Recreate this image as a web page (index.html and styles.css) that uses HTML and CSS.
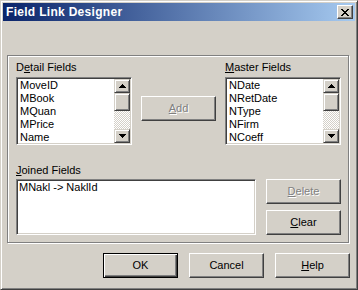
FILE: index.html
```html
<!DOCTYPE html>
<html lang="en">
<head>
    <meta charset="UTF-8">
    <title>Field Link Designer</title>
    <link rel="stylesheet" href="styles.css">
</head>
<body>

<div class="window">
    <!-- Caption -->
    <div class="titlebar">
        <span class="title">Field Link Designer</span>
        <div class="close-btn">
            <svg width="8" height="7" viewBox="0 0 8 7" shape-rendering="crispEdges">
                <path d="M0 0h2v1h-2zM6 0h2v1h-2zM1 1h2v1h-2zM5 1h2v1h-2zM2 2h4v1h-4zM3 3h2v1h-2zM2 4h4v1h-4zM1 5h2v1h-2zM5 5h2v1h-2zM0 6h2v1h-2zM6 6h2v1h-2z" fill="#000"/>
            </svg>
        </div>
    </div>

    <div class="client">
        <div class="group">
            <div class="row-top">
                <div class="field-col">
                    <div class="label">D<u>e</u>tail Fields</div>
                    <div class="listbox">
                        <ul class="items">
                            <li>MoveID</li>
                            <li>MBook</li>
                            <li>MQuan</li>
                            <li>MPrice</li>
                            <li>Name</li>
                        </ul>
                        <div class="vscroll">
                            <div class="sb-btn arrow-up">
                                <svg width="7" height="4" viewBox="0 0 7 4" shape-rendering="crispEdges"><path d="M3 0h1v1h-1zM2 1h3v1h-3zM1 2h5v1h-5zM0 3h7v1h-7z" fill="#000"/></svg>
                            </div>
                            <div class="sb-btn thumb"></div>
                            <div class="track"></div>
                            <div class="sb-btn arrow-down">
                                <svg width="7" height="4" viewBox="0 0 7 4" shape-rendering="crispEdges"><path d="M0 0h7v1h-7zM1 1h5v1h-5zM2 2h3v1h-3zM3 3h1v1h-1z" fill="#000"/></svg>
                            </div>
                        </div>
                    </div>
                </div>

                <div class="add-wrap">
                    <div class="btn disabled"><span><u>A</u>dd</span></div>
                </div>

                <div class="field-col master">
                    <div class="label"><u>M</u>aster Fields</div>
                    <div class="listbox">
                        <ul class="items">
                            <li>NDate</li>
                            <li>NRetDate</li>
                            <li>NType</li>
                            <li>NFirm</li>
                            <li>NCoeff</li>
                        </ul>
                        <div class="vscroll">
                            <div class="sb-btn arrow-up">
                                <svg width="7" height="4" viewBox="0 0 7 4" shape-rendering="crispEdges"><path d="M3 0h1v1h-1zM2 1h3v1h-3zM1 2h5v1h-5zM0 3h7v1h-7z" fill="#000"/></svg>
                            </div>
                            <div class="sb-btn thumb"></div>
                            <div class="track"></div>
                            <div class="sb-btn arrow-down">
                                <svg width="7" height="4" viewBox="0 0 7 4" shape-rendering="crispEdges"><path d="M0 0h7v1h-7zM1 1h5v1h-5zM2 2h3v1h-3zM3 3h1v1h-1z" fill="#000"/></svg>
                            </div>
                        </div>
                    </div>
                </div>
            </div>

            <div class="label joined-label"><u>J</u>oined Fields</div>
            <div class="row-bottom">
                <div class="listbox joined">
                    <ul class="items">
                        <li>MNakl -&gt; NaklId</li>
                    </ul>
                </div>
                <div class="side-buttons">
                    <div class="btn disabled"><span><u>D</u>elete</span></div>
                    <div class="btn"><span><u>C</u>lear</span></div>
                </div>
            </div>
        </div>

        <!-- OK / Cancel / Help -->
        <div class="dialog-buttons">
            <div class="btn default"><span>OK</span></div>
            <div class="btn"><span>Cancel</span></div>
            <div class="btn"><span><u>H</u>elp</span></div>
        </div>
    </div>
</div>

</body>
</html>
```

FILE: styles.css
```css
/* Reset */
* {
    margin: 0;
    padding: 0;
    box-sizing: border-box;
}

body {
    font-family: "Liberation Sans", Arial, sans-serif;
    font-size: 11px;
    line-height: 13px;
    color: #000;
    background-color: #d4d0c8;
}

u {
    text-decoration: underline;
    text-underline-offset: 1px;
}

/* Window frame */
.window {
    width: 358px;
    height: 290px;
    padding: 2px;
    background-color: #d4d0c8;
    border: 1px solid;
    border-color: #d4d0c8 #404040 #404040 #d4d0c8;
    box-shadow: inset 1px 1px 0 #fff, inset -1px -1px 0 #808080;
}

/* Caption bar */
.titlebar {
    height: 18px;
    display: flex;
    align-items: center;
    justify-content: space-between;
    padding: 0 2px 0 3px;
    background: linear-gradient(to right, #0a246a, #a6caf0);
}

.title {
    color: #fff;
    font-weight: bold;
    font-size: 12px;
    letter-spacing: 0.3px;
}

.close-btn {
    width: 16px;
    height: 14px;
    display: flex;
    align-items: center;
    justify-content: center;
    background-color: #d4d0c8;
    border: 1px solid;
    border-color: #fff #404040 #404040 #fff;
    box-shadow: inset -1px -1px 0 #808080, inset 1px 1px 0 #d4d0c8;
}

.close-btn svg {
    display: block;
}

/* Client area */
.client {
    padding: 0 5px 0 4px;
}

.group {
    width: 342px;
    height: 188px;
    margin-top: 34px;
    padding: 5px 0 0 8px;
    border: 1px solid #808080;
    box-shadow: inset 1px 1px 0 #fff, 1px 1px 0 #fff;
}

.label {
    height: 13px;
}

.row-top {
    display: flex;
    align-items: flex-start;
}

.field-col {
    width: 116px;
}

.field-col .label {
    margin-bottom: 3px;
}

.add-wrap {
    margin: 35px 0 0 9px;
}

.master {
    margin-left: 9px;
}

.joined-label {
    margin-top: 19px;
    margin-bottom: 2px;
}

.row-bottom {
    display: flex;
    align-items: flex-start;
}

.side-buttons {
    display: flex;
    flex-direction: column;
    gap: 6px;
    margin-left: 10px;
}

/* Sunken list box */
.listbox {
    height: 68px;
    display: flex;
    padding: 1px;
    background-color: #fff;
    border: 1px solid;
    border-color: #808080 #fff #fff #808080;
    box-shadow: inset 1px 1px 0 #404040, inset -1px -1px 0 #d4d0c8;
}

.listbox.joined {
    width: 240px;
    height: 56px;
}

.items {
    flex: 1;
    list-style: none;
    padding-left: 2px;
    overflow: hidden;
}

.joined .items {
    padding-left: 1px;
}

.items li {
    height: 13px;
    white-space: nowrap;
}

/* Vertical scroll bar */
.vscroll {
    width: 16px;
    display: flex;
    flex-direction: column;
}

.sb-btn {
    background-color: #d4d0c8;
    border: 1px solid;
    border-color: #d4d0c8 #404040 #404040 #d4d0c8;
    box-shadow: inset 1px 1px 0 #fff, inset -1px -1px 0 #808080;
}

.arrow-up, .arrow-down {
    height: 14px;
    display: flex;
    align-items: center;
    justify-content: center;
}

.arrow-up svg, .arrow-down svg {
    display: block;
}

.thumb {
    height: 18px;
}

.track {
    flex: 1;
    background: repeating-conic-gradient(#fff 0 25%, #d4d0c8 0 50%) 0 0 / 2px 2px;
}

/* Push buttons */
.btn {
    width: 75px;
    height: 25px;
    display: flex;
    align-items: center;
    justify-content: center;
    background-color: #d4d0c8;
    border: 1px solid;
    border-color: #fff #404040 #404040 #fff;
    box-shadow: inset -1px -1px 0 #808080, inset 1px 1px 0 #d4d0c8;
}

.btn.default {
    border-color: #000;
    box-shadow: inset 1px 1px 0 #fff, inset -1px -1px 0 #404040, inset -2px -2px 0 #808080;
}

.btn.disabled {
    color: #808080;
    text-shadow: 1px 1px 0 #fff;
}

.dialog-buttons {
    display: flex;
    justify-content: flex-end;
    gap: 11px;
    margin-top: 10px;
}
```
